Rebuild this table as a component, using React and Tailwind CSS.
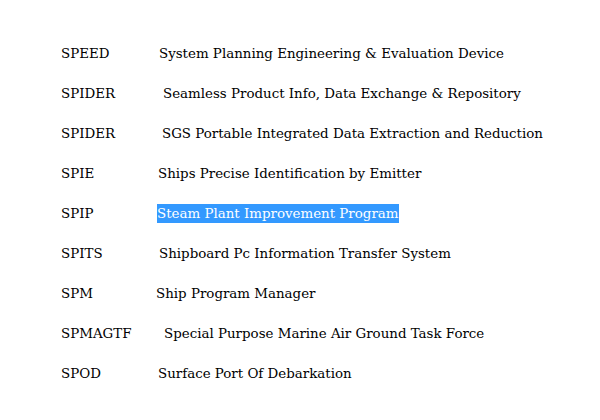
export default function App() {
  const rows = [
    ["SPEED", "System Planning Engineering & Evaluation Device", "ml-[2px]"],
    ["SPIDER", "Seamless Product Info, Data Exchange & Repository", "ml-[6px]"],
    ["SPIDER", "SGS Portable Integrated Data Extraction and Reduction", "ml-[5px]"],
    ["SPIE", "Ships Precise Identification by Emitter", "ml-[1px]"],
    ["SPIP", "Steam Plant Improvement Program", "ml-[0px]", true],
    ["SPITS", "Shipboard Pc Information Transfer System", "ml-[2px]"],
    ["SPM", "Ship Program Manager", "ml-[-1px]"],
    ["SPMAGTF", "Special Purpose Marine Air Ground Task Force", "ml-[7px]"],
    ["SPOD", "Surface Port Of Debarkation", "ml-[1px]"],
  ];
  return (
    <div className="w-[600px] h-[420px] bg-white pt-[34px] pl-[61px] text-black text-[13.4px]" style={{ fontFamily: '"DejaVu Serif", serif' }}>
      {rows.map(([a, d, m, hl], i) => (
        <div key={i} className="flex items-center h-[40px]">
          <div className="w-[96px] shrink-0">{a}</div>
          <div className={m}>
            <span className={hl ? "bg-[#3399ff] text-white py-[2px] pr-[1px]" : ""}>{d}</span>
          </div>
        </div>
      ))}
    </div>
  );
}
